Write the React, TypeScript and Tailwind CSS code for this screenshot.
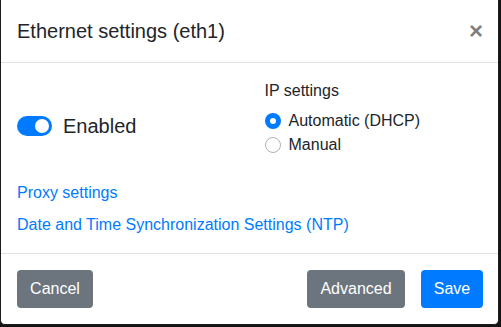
import React from "react";

export default function App() {
  return (
    <div
      className="w-[501px] h-[327px] overflow-hidden bg-[#141414]"
      style={{ fontFamily: '"Liberation Sans", Arial, sans-serif' }}
    >
      <div className="w-[499px] bg-white border-x border-b border-[#1c1c1c] rounded-b-[5px] text-[#212529] flex flex-col">
        {/* header */}
        <div className="flex items-start justify-between px-4 pt-4 pb-4 border-b border-[#dee2e6]">
          <h5 className="text-[20px] leading-[30px] font-normal">Ethernet settings (eth1)</h5>
          <button className="text-[24px] leading-none font-bold text-black opacity-50 px-0 mt-[3px] mr-[-1px]">×</button>
        </div>
        {/* body */}
        <div className="p-4 flex flex-col">
          <div className="flex">
            <div className="w-1/2 pt-8">
              <div className="flex items-center h-[30px]">
                <div className="w-[35px] h-[20px] rounded-full bg-[#007bff] flex items-center justify-end pr-[3px]">
                  <div className="w-[14px] h-[14px] rounded-full bg-white" />
                </div>
                <span className="ml-[11px] text-[20px] leading-[30px]">Enabled</span>
              </div>
            </div>
            <div className="w-1/2 pl-[15px]">
              <div className="text-[16px] leading-[24px] mb-[6px]">IP settings</div>
              <div className="flex items-center h-[24px]">
                <div className="w-4 h-4 rounded-full bg-[#007bff] flex items-center justify-center">
                  <div className="w-[6px] h-[6px] rounded-full bg-white" />
                </div>
                <span className="ml-2 text-[16px] leading-[24px]">Automatic (DHCP)</span>
              </div>
              <div className="flex items-center h-[24px]">
                <div className="w-4 h-4 rounded-full bg-white border border-[#adb5bd]" />
                <span className="ml-2 text-[16px] leading-[24px]">Manual</span>
              </div>
            </div>
          </div>
          <a className="mt-[24px] text-[16px] leading-[24px] text-[#007bff] self-start">Proxy settings</a>
          <a className="mt-[8px] text-[16px] leading-[24px] text-[#007bff] self-start">
            Date and Time Synchronization Settings (NTP)
          </a>
        </div>
        {/* footer */}
        <div className="border-t border-[#dee2e6] p-4 flex items-center">
          <button className="h-[38px] w-[76px] rounded-[4px] bg-[#6c757d] text-white text-[16px] leading-[24px]">
            Cancel
          </button>
          <div className="flex-1" />
          <button className="h-[38px] w-[98px] rounded-[4px] bg-[#6c757d] text-white text-[16px] leading-[24px]">
            Advanced
          </button>
          <button className="ml-4 mr-[-1px] h-[38px] w-[62px] rounded-[4px] bg-[#007bff] text-white text-[16px] leading-[24px]">
            Save
          </button>
        </div>
      </div>
    </div>
  );
}
